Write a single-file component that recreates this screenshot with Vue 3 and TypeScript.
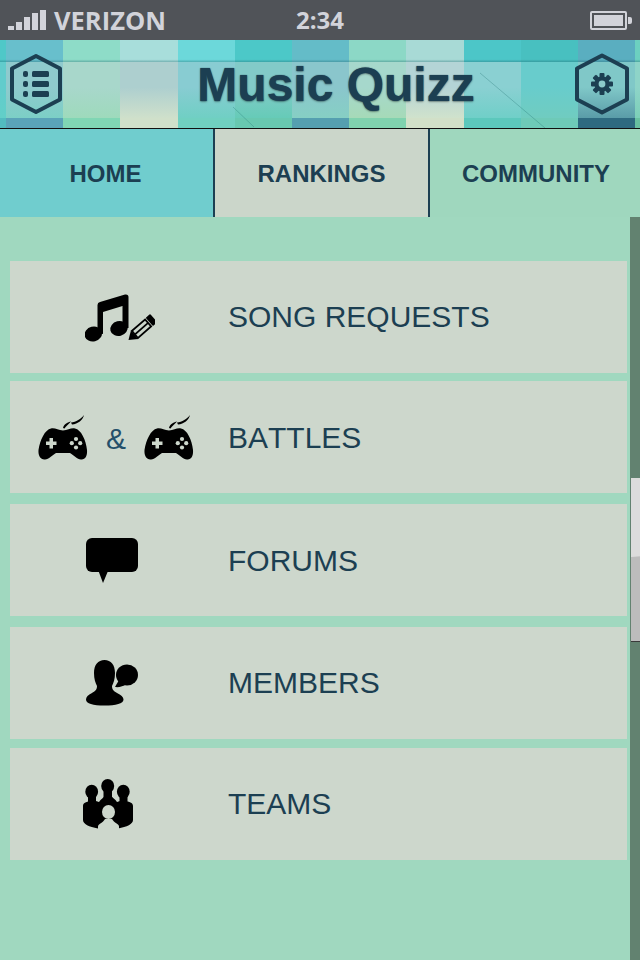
<script setup lang="ts">
interface Col { top: string; mid: string; low: string; base: string }
const palette: Col[] = [
  { top: '#4fc8c8', mid: '#62cccc', low: '#62cfc8', base: '#52bcc0' },
  { top: '#68bfcc', mid: '#8fcacd', low: '#7ccfc6', base: '#5aa3b8' },
  { top: '#8edcc8', mid: '#a8d7cb', low: '#9edabc', base: '#80d6b4' },
  { top: '#a8dedb', mid: '#adcfcf', low: '#cfe0cb', base: '#d0e0ca' },
  { top: '#6cd8da', mid: '#88ccd2', low: '#70cfc4', base: '#70d0c0' },
  { top: '#4cc8c8', mid: '#82cac8', low: '#66cbb8', base: '#68c8b0' },
  { top: '#64bcc8', mid: '#8ac6cc', low: '#86cfc4', base: '#559fb0' },
  { top: '#8cd8c6', mid: '#a6d8cc', low: '#a6dab8', base: '#80d2ae' },
  { top: '#a8dad6', mid: '#b4d4d6', low: '#d0e2cc', base: '#d2e0c8' },
  { top: '#4cc6c8', mid: '#8ad0d2', low: '#70cfc8', base: '#5cc8bc' },
  { top: '#48c0c0', mid: '#68cccc', low: '#70ccc0', base: '#6ecab8' },
  { top: '#5aaec0', mid: '#80c8c8', low: '#5a9ca8', base: '#2e6a80' },
  { top: '#6cd0c0', mid: '#8ed4c8', low: '#7ccfb8', base: '#68c0a0' },
]

const tiles = palette.flatMap((c) => [
  `background:linear-gradient(transparent 88%,rgba(20,90,100,.35)),${c.top}`,
  `background:linear-gradient(${c.mid},${c.mid} 45%,${c.low})`,
  `background:${c.base}`,
])

const tabs = [
  { label: 'HOME', tone: 'home' },
  { label: 'RANKINGS', tone: 'rankings' },
  { label: 'COMMUNITY', tone: 'community' },
]
const bars = [4, 8, 13, 17, 20]
const gearAngles = [0, 45, 90, 135]
const listRows = [19, 29, 39]
const rowBg = '#cdd7cc'
</script>

<template>
  <div class="screen">
    <div class="status">
      <div class="carrier">
        <div class="signal">
          <i v-for="h in bars" :key="h" :style="{ height: h + 'px' }"></i>
        </div>
        <span>VERIZON</span>
      </div>
      <span class="time">2:34</span>
      <div class="battery"><i></i></div>
    </div>

    <header class="header">
      <div class="mosaic">
        <i v-for="(t, n) in tiles" :key="n" :style="t"></i>
      </div>
      <svg class="scratches" width="640" height="88" viewBox="0 0 640 88">
        <path d="M480 33 L545 88 M233 67 L254 87" fill="none" stroke="#1e6e6e" stroke-opacity="0.3" />
      </svg>
      <div class="bar">
        <svg class="hex" width="56" height="64" viewBox="0 0 56 64">
          <path d="M28 4 L52 16.500 V47.500 L28 60 L4 47.500 V16.500Z" fill="none" stroke="#1c3f52" stroke-width="4" stroke-linejoin="round" />
          <g v-for="y in listRows" :key="y" fill="#1c3f52">
            <rect x="15" :y="y" width="5" height="6" rx="2" />
            <rect x="24" :y="y" width="17" height="6" rx="1.500" />
          </g>
        </svg>
        <h1 class="title">Music Quizz</h1>
        <svg class="hex" width="56" height="64" viewBox="0 0 56 64">
          <path d="M28 3.500 L53 16.500 V47.500 L28 60.500 L3 47.500 V16.500Z" fill="none" stroke="#1c3f52" stroke-width="4" stroke-linejoin="round" />
          <g transform="translate(28 32)">
            <rect v-for="a in gearAngles" :key="a" x="-2.500" y="-11" width="5" height="22" rx="1" fill="#1c3f52" :transform="`rotate(${a})`" />
            <circle r="7.600" fill="#1c3f52" />
            <circle r="3.400" fill="#8ccaca" />
          </g>
        </svg>
      </div>
    </header>

    <nav class="tabs">
      <div v-for="t in tabs" :key="t.label" class="tab" :class="t.tone">{{ t.label }}</div>
    </nav>

    <main class="body">
      <div class="list">
        <div class="row r1">
          <div class="icon">
            <svg class="i-music" width="70" height="50" viewBox="0 0 70 50">
              <path d="M12.500 39 V11 Q12.500 8.500 15 8 L40 .5 Q43.500 0 43.500 3 V34 H37.500 V12 L18 18 V40Z" />
              <ellipse cx="8.300" cy="40" rx="8.800" ry="7.400" transform="rotate(-14 8.300 40)" />
              <ellipse cx="34" cy="34.500" rx="8.800" ry="7.400" transform="rotate(-14 34 34.500)" />
              <g transform="translate(43.500 46) rotate(-41)">
                <path d="M0 0 L8 -5.500 V5.500Z" />
                <rect x="8.500" y="-4.600" width="17.500" height="9.200" fill="none" stroke="#000" stroke-width="1.800" />
                <rect x="9" y="-.9" width="17" height="1.800" />
                <rect x="27.500" y="-5.500" width="6" height="11" rx="1" />
              </g>
            </svg>
          </div>
          <span class="label">SONG REQUESTS</span>
        </div>

        <div class="row r2">
          <div class="icon pads">
            <svg v-for="p in 2" :key="p" width="50" height="46" viewBox="0 0 50 46">
              <path d="M13 14.500 C17 13.500 20 16.500 25 16.500 C30 16.500 33 13.500 37 14.500 C43 15.500 48 26 49 36 C49.500 42 47 46 43 45.500 C39 45 36 41.500 32 39 H18 C14 41.500 11 45 7 45.500 C3 46 0 42 .5 36 C2 26 7 15.500 13 14.500Z" />
              <path d="M25 14 C26 10 30 8 33 7.500 C31 10 28 12 26.500 14.500Z M33 8.500 C38 8 43 5 46 1 C45 6 40 10 34 10.500Z" />
              <path :fill="rowBg" d="M11.500 24 h3.500 v3.500 h3.500 v3.500 h-3.500 v3.500 h-3.500 v-3.500 h-3.500 v-3.500 h3.500Z" />
              <g :fill="rowBg">
                <circle cx="38" cy="25" r="2.100" />
                <circle cx="38" cy="33.500" r="2.100" />
                <circle cx="33.800" cy="29.200" r="2.100" />
                <circle cx="42.200" cy="29.200" r="2.100" />
              </g>
            </svg>
            <span class="amp">&amp;</span>
          </div>
          <span class="label">BATTLES</span>
        </div>

        <div class="row r3">
          <div class="icon">
            <svg class="i-chat" width="52" height="45" viewBox="0 0 52 45">
              <rect width="52" height="34" rx="6" />
              <path d="M12.500 33 L17 45 L22 33Z" />
            </svg>
          </div>
          <span class="label">FORUMS</span>
        </div>

        <div class="row r4">
          <div class="icon">
            <svg class="i-member" width="52" height="46" viewBox="0 0 52 46">
              <path d="M18.500 0 C25 0 29 5 29 13 C29 19 27.500 23 26 26 C26 30 28 31 31 33 C35 35 37.500 37 37.500 39.500 C37.500 43.500 30 45.500 18.500 45.500 C7 45.500 0 43.500 0 39.500 C0 37 2 35 6 33 C9 31 11 30 11 26 C9.500 23 8 19 8 13 C8 5 12 0 18.500 0Z" />
              <ellipse cx="41" cy="15" rx="11" ry="10.500" />
              <path d="M33 20 L29 27 C33 27.500 37 26.500 41 24Z" />
            </svg>
          </div>
          <span class="label">MEMBERS</span>
        </div>

        <div class="row r5">
          <div class="icon">
            <svg class="i-team" width="51" height="50" viewBox="0 0 51 50">
              <ellipse cx="24.700" cy="7" rx="6.500" ry="7" />
              <ellipse cx="8.700" cy="12.700" rx="6.400" ry="7" />
              <ellipse cx="40.300" cy="12.700" rx="6.400" ry="7" />
              <path d="M20.500 10 H29 V19 H20.500Z M5 16 H13 V24 H5Z M36.500 16 H44.500 V24 H36.500Z" />
              <path d="M0 27 C0 24 3 23 7 22 H11 C13 22 15 22.500 16 23 C18 20 20 19 22 17 H28 C30 19 32 20 34 23 C35 22.500 37 22 39 22 H43 C47 23 50 24 50 27 V41 C50 45 44 48 35 49.500 H15 C6 48 0 45 0 41Z" />
              <ellipse cx="25.500" cy="33" rx="6.500" ry="7" :fill="rowBg" />
              <path :fill="rowBg" d="M15 51 V47.500 C15 45 20 44 22 40 H29 C31 44 36 45 36 47.500 V51Z" />
            </svg>
          </div>
          <span class="label">TEAMS</span>
        </div>
      </div>
      <div class="track"><div class="thumb"></div></div>
    </main>
  </div>
</template>

<style scoped>
.screen {
  width: 640px;
  height: 960px;
  display: flex;
  flex-direction: column;
  background: #a0d8bf;
  overflow: hidden;
  font-family: "Liberation Sans", Arial, sans-serif;
}
.status {
  height: 40px;
  flex: none;
  display: grid;
  grid-template-columns: 1fr auto 1fr;
  align-items: center;
  padding: 0 8px;
  box-sizing: border-box;
  background: #505358;
  color: #d2d3da;
  font-family: "Open Sans", sans-serif;
  font-weight: 700;
  font-size: 24px;
}
.carrier {
  display: flex;
  align-items: center;
  gap: 8px;
  font-size: 25.5px;
}
.signal {
  display: flex;
  align-items: flex-end;
  gap: 2px;
  height: 20px;
}
.signal i {
  width: 6px;
  background: #d2d3da;
}
.time {
  line-height: 40px;
}
.battery {
  justify-self: end;
  width: 37px;
  height: 19px;
  box-sizing: border-box;
  border: 2px solid #d2d3da;
  border-radius: 2px;
  padding: 2px;
  margin-right: 5px;
  position: relative;
}
.battery i {
  display: block;
  height: 100%;
  background: #d2d3da;
}
.battery::after {
  content: "";
  position: absolute;
  right: -7px;
  top: 4px;
  width: 4px;
  height: 7px;
  background: #d2d3da;
  border-radius: 0 2px 2px 0;
}
.header {
  height: 88px;
  flex: none;
  display: grid;
  overflow: hidden;
}
.mosaic {
  grid-area: 1 / 1;
  display: grid;
  grid-template-columns: 6px repeat(11, 57.2px) 5px;
  grid-template-rows: 22px 56px 10px;
  grid-auto-flow: column;
}
.scratches {
  grid-area: 1 / 1;
}
.bar {
  grid-area: 1 / 1;
  display: flex;
  align-items: center;
  justify-content: space-between;
  padding: 0 10px 0 8px;
}
.title {
  margin: 1px 0 0 34px;
  font-size: 48px;
  font-weight: 700;
  color: #1c3f52;
  text-shadow: 0 0 1px #1c3f52, 0 1px 2px rgba(0, 0, 0, 0.35);
}
.tabs {
  flex: none;
  height: 88px;
  display: grid;
  grid-template-columns: 213px 215px 212px;
  border-top: 1px solid #111;
}
.tab {
  display: flex;
  align-items: center;
  justify-content: center;
  padding-top: 2px;
  box-sizing: border-box;
  font-size: 24px;
  font-weight: 700;
  color: #1c3f52;
}
.home {
  background: #70cdce;
  padding-right: 2px;
}
.rankings {
  background: #cbd6ca;
  border-left: 2px solid #1c3f52;
}
.community {
  background: #9fd7be;
  border-left: 2px solid #1c3f52;
  padding-left: 2px;
}
.body {
  flex: 1;
  display: flex;
  min-height: 0;
}
.list {
  flex: 1;
  display: flex;
  flex-direction: column;
  padding: 44px 3px 0 10px;
}
.row {
  flex: none;
  height: 112px;
  display: flex;
  align-items: center;
  background: #cdd7cc;
}
.r2 {
  margin-top: 8px;
}
.r3,
.r4 {
  margin-top: 11px;
}
.r5 {
  margin-top: 9px;
}
.r2 .label,
.r3 .label {
  padding-top: 2px;
}
.icon {
  width: 218px;
  flex: none;
  box-sizing: border-box;
  display: flex;
  align-items: center;
}
.label {
  font-size: 30px;
  font-kerning: none;
  color: #1c3f52;
}
.i-music {
  margin: 4px 0 0 75px;
}
.pads {
  position: relative;
  padding-left: 28px;
  gap: 56px;
}
.amp {
  position: absolute;
  left: 96px;
  top: 50%;
  transform: translateY(-45%);
  font-size: 30px;
  color: #25506a;
}
.i-chat {
  margin: 1px 0 0 76px;
}
.i-member {
  margin: 0 0 0 76px;
}
.i-team {
  margin: 0 0 0 73px;
}
.track {
  width: 10px;
  flex: none;
  background: #628270;
  padding: 261px 0 0 1px;
  box-sizing: border-box;
}
.thumb {
  height: 164px;
  box-sizing: border-box;
  border-bottom: 1px solid #3a3a3a;
  background: linear-gradient(176deg, #dcdcdc 48%, #bcbcbc 48.5%);
}
</style>

<style>
html,
body {
  margin: 0;
  overflow: hidden;
}
</style>
